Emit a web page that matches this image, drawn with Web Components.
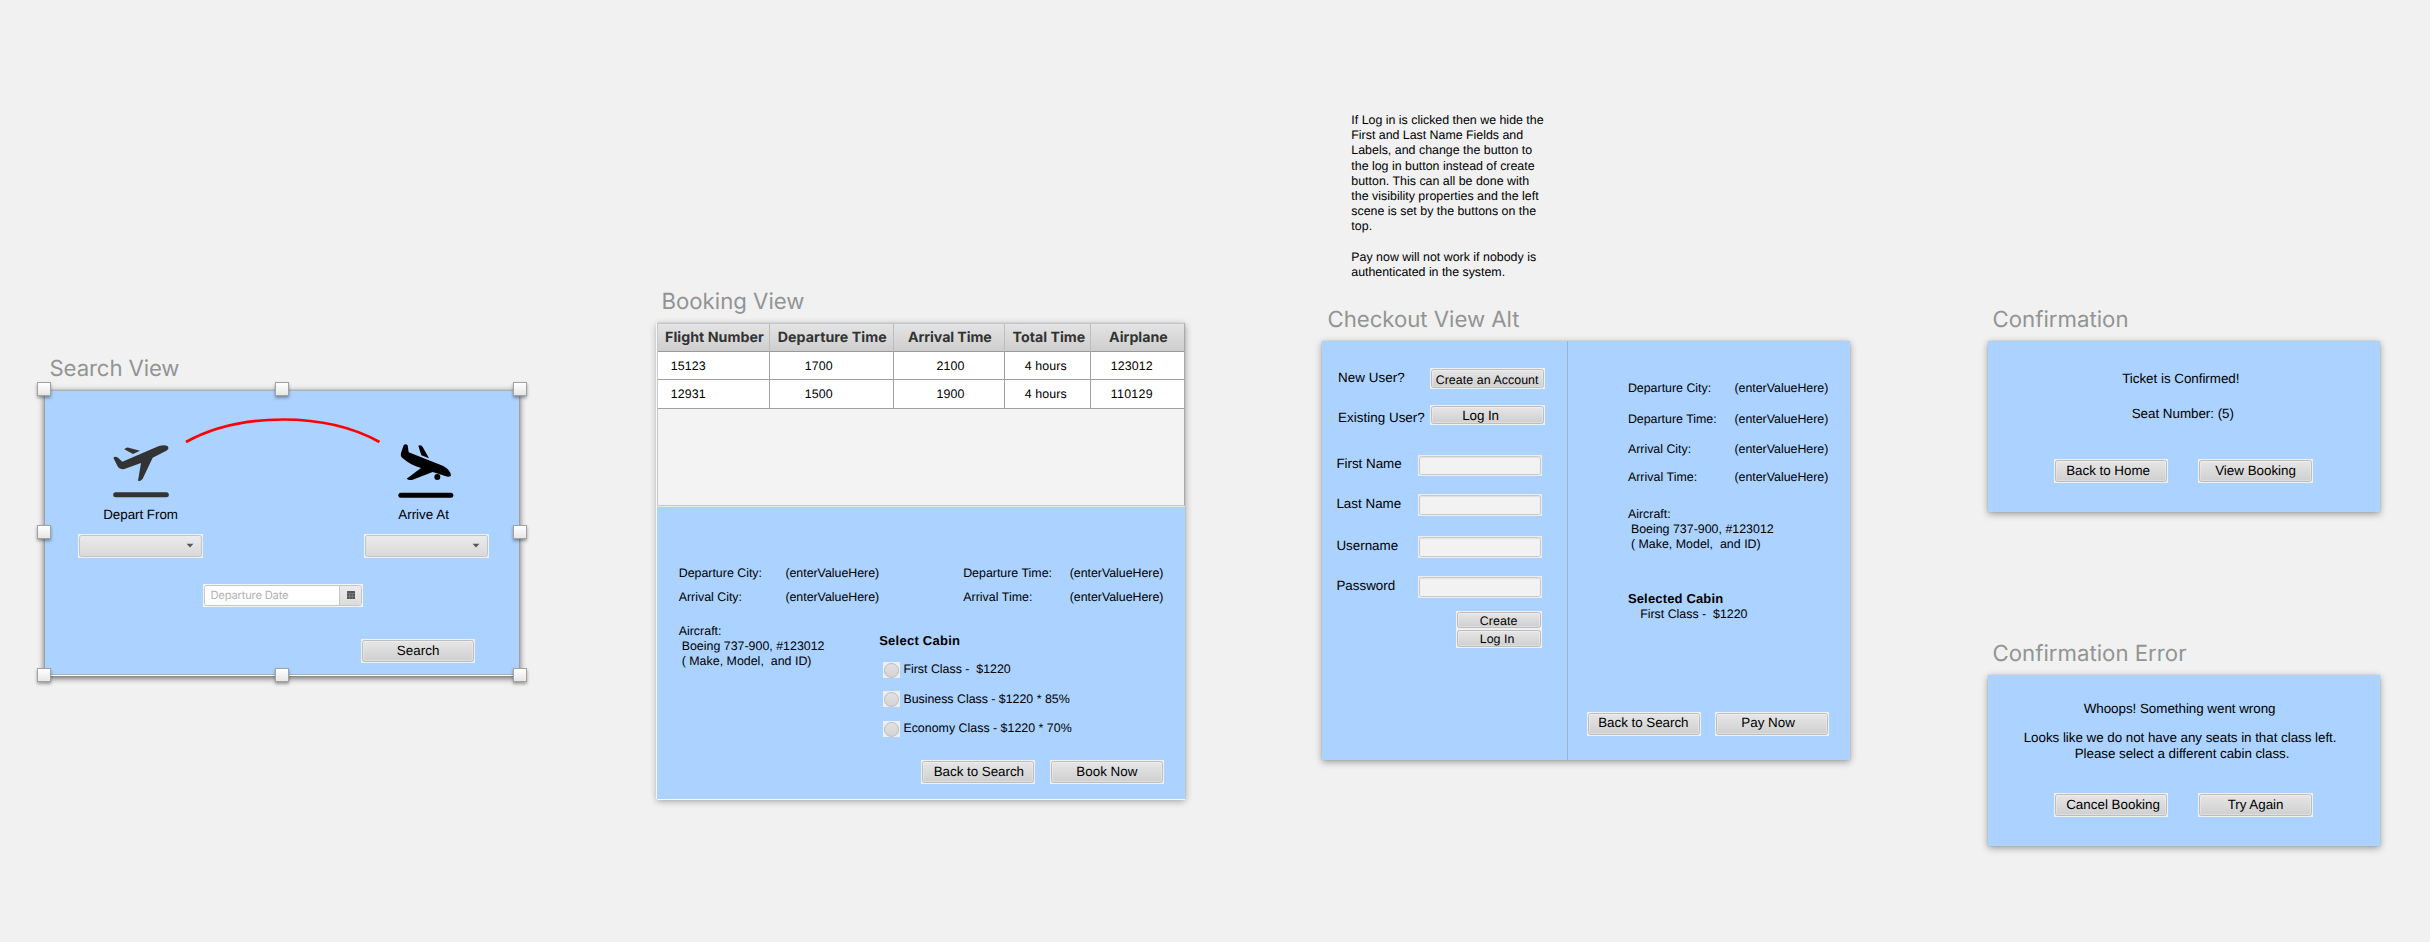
<!DOCTYPE html>
<html lang="en">
<head>
<meta charset="utf-8">
<title>Flight booking artboards</title>
<style>
html,body{margin:0;height:100%;background:#f1f1f1;overflow:hidden}
body{font-family:"Liberation Sans",Arial,sans-serif;color:#000;text-rendering:geometricPrecision}
</style>
</head>
<body>
<design-canvas></design-canvas>
<script>
const FLOW = `.r{display:flex;align-items:flex-start}.r>div{flex:none}`;

/* Lay items out in flowing rows; x/y are canvas units turned into margins. */
function stack(x0, y0, rows) {
  let y = y0;
  return rows.map(items => {
    const top = Math.min(...items.map(i => i.y));
    const bottom = Math.max(...items.map(i => i.y + i.h));
    let x = x0;
    const cells = items.map(i => {
      const s = `<div style="margin:${i.y - top}px 0 0 ${i.x - x}px;width:${i.w}px;height:${i.h}px">${i.html}</div>`;
      x = i.x + i.w;
      return s;
    }).join('');
    const row = `<div class="r" style="margin-top:${top - y}px;height:${bottom - top}px">${cells}</div>`;
    y = bottom;
    return row;
  }).join('');
}
const small = (x, b, w, t, k = '') => ({x: x - .3, y: b - 12, w: w + 2, h: 16, html: `<fit-text class="s ${k}" w="${w + .8}">${t}</fit-text>`});
const big = (x, b, w, t) => ({x: x - .3, y: b - 13, w: w + 2, h: 17, html: `<fit-text class="b" w="${w + .8}">${t}</fit-text>`});
const btn = (x, y, w, h, lx, lb, lw, t, k = 'b') => ({x, y, w, h,
  html: `<ui-button style="--pl:${lx - x - .3}px;--pt:${lb - y - (k === 'b' ? 13 : 12)}px"><fit-text class="${k}" w="${lw + .8}">${t}</fit-text></ui-button>`});
const box = (x, y, w, h, html) => ({x, y, w, h, html});
const group = (x, y, w, h, rows) => box(x, y, w, h, stack(x, y, rows));

function define(name, css, html, after) {
  customElements.define(name, class extends HTMLElement {
    connectedCallback() {
      if (this.shadowRoot) return;
      const root = this.attachShadow({mode: 'open'});
      root.innerHTML = `<style>${css}</style>${typeof html === 'function' ? html(this) : html}`;
      if (after) after(this, root);
    }
  });
}

/* Single line of text, tracked to an exact measure */
define('fit-text', `
:host{display:block;white-space:pre}
span{display:inline-block}
:host(.s){font-size:12.4px;line-height:16px}
:host(.b){font-size:13.4px;line-height:17px}
:host(.bold){font-weight:700;font-size:13px}
:host(.h){font:700 14.200px/20px Inter,sans-serif;color:#333}
:host(.t){font:400 22.200px/28px Inter,sans-serif;color:#929492}
:host(.d){font:400 11.200px/14px Inter,sans-serif;color:#b3b3b3}`,
'<span><slot></slot></span>', (el, root) => {
  const span = root.querySelector('span');
  const n = el.textContent.length, want = +el.getAttribute('w');
  if (want && n > 1) span.style.letterSpacing = ((want - span.getBoundingClientRect().width) / (n - 1)) + 'px';
});

define('ui-button', `
:host{display:block;height:100%;box-sizing:border-box;padding:1px;background:#eef0f3}
div{box-sizing:border-box;height:100%;border:1px solid #bdbdbd;border-radius:2.5px;background:linear-gradient(#e6e6e6,#cfcfcf);box-shadow:inset 0 0 0 1px rgba(255,255,255,.3)}
slot{display:block;margin:calc(var(--pt) - 2px) 0 0 calc(var(--pl) - 2px)}
div{display:flow-root}`, '<div><slot></slot></div>');

define('ui-select', `
:host{display:flex;height:100%;box-sizing:border-box;padding:1px;background:#eef0f3}
div{flex:1;display:flex;align-items:center;justify-content:flex-end;padding-right:7px;border:1px solid #c3c3c3;border-radius:2.5px;background:linear-gradient(#ebebeb,#d9d9d9)}`,
'<div><svg width="8" height="5" viewBox="0 0 8 5"><path d="M.6.8H7.4L4 4.4Z" fill="#555"/></svg></div>');

define('ui-field', `
:host{display:block;height:100%;box-sizing:border-box;padding:1px;background:#e9edf1}
div{box-sizing:border-box;height:100%;border:1px solid #cacaca;border-radius:2.5px;background:#f2f2f2;box-shadow:inset 0 1px 1px #e2e2e2}`, '<div></div>');

define('ui-date', `
:host{display:flex;height:100%;box-sizing:border-box;padding:1px;background:#f2f4f6}
main{flex:1;display:flex;border:1px solid #c6c6c6;border-radius:2.5px;background:#fff;overflow:hidden}
.v{flex:1;padding:2.5px 0 0 5.5px}
.c{width:21px;border-left:1px solid #c6c6c6;background:linear-gradient(#ececec,#dcdcdc);display:flex;align-items:center;justify-content:center}`,
`<main><div class="v"><fit-text class="d" w="78">Departure Date</fit-text></div>
<div class="c"><svg width="8" height="8" viewBox="0 0 8 8"><rect width="8" height="8" rx=".5" fill="#555"/><path d="M0 2.4H8M0 5.2H8M2.7 2.4V8M5.3 2.4V8" stroke="#999" stroke-width=".5"/></svg></div></main>`);

define('ui-radio', `
:host{display:flex;width:17px;height:16px;background:#eceef0;align-items:center;justify-content:center}
div{box-sizing:border-box;width:15px;height:15px;border:1px solid #bcbcbc;border-radius:50%;background:linear-gradient(#e2e2e2,#d3d3d3)}`, '<div></div>');

define('icon-takeoff', ':host,svg{display:block}',
`<svg width="56" height="54" viewBox="248 278 168 162" fill="#333"><path d="M249 319Q256 313 263 319L276 331L384 285Q404 278 412 285Q418 293 408 298L367 319L337 382Q330 391 323 388L332 335L282 353Q268 355 263 347Z"/><path d="M282 294Q286 288 295 289L329 298L308 308Z"/><rect x="248.500" y="422.500" width="167" height="15" rx="7.500"/></svg>`);
define('icon-landing', ':host,svg{display:block}',
`<svg width="56" height="55" viewBox="354 276 168 165"><path d="M371 283Q376 276 383 283L386 304L490 345Q512 357 513 374Q506 379 498 376L458 363L398 386Q386 389 380 383L423 351Q390 342 364 318Q361 312 363 306Z"/><path d="M415 284Q424 281 428 288L447 322L424 313Z"/><circle cx="472" cy="378" r="9"/><rect x="355" y="425" width="165" height="15" rx="7.500"/></svg>`);
define('flight-arc', ':host,svg{display:block}',
`<svg width="196" height="27" viewBox="185 416 196 27"><path d="M186 441C240 411 326 411 379.500 441" fill="none" stroke="#f00" stroke-width="2.700"/></svg>`);

/* Titled artboard: heading above, sheet below */
define('art-board', `
:host{position:absolute;display:block}
.name{height:28px;margin:0 0 7px var(--tx,6px)}
.sheet{width:var(--w);height:var(--h);background:#acd2ff;box-shadow:0 2px 7px rgba(0,0,0,.36),0 0 1px rgba(0,0,0,.2);display:flow-root}`,
el => `<div class="name"><fit-text class="t" w="${el.getAttribute('tw')}">${el.getAttribute('label')}</fit-text></div><div class="sheet"><slot></slot></div>`);

define('search-view', FLOW + ':host{display:block;height:283px;border-top:1px solid #a9b0b8;border-bottom:1px solid #a9b0b8;box-shadow:0 2px 0 -1px #fff,0 3px 6px rgba(0,0,0,.4)}', stack(45, 390, [
  [box(113, 443, 56, 54, '<icon-takeoff></icon-takeoff>'), box(185, 416, 196, 27, '<flight-arc></flight-arc>'), box(398, 442, 56, 55, '<icon-landing></icon-landing>')],
  [big(103.5, 518, 74, 'Depart From'), big(398.5, 518, 50, 'Arrive At')],
  [box(78, 533, 125, 24, '<ui-select></ui-select>'), box(364, 533, 125, 24, '<ui-select></ui-select>')],
  [box(203, 583, 160, 23, '<ui-date></ui-date>')],
  [btn(361, 638, 114, 24, 397, 654, 42, 'Search')]
]));

define('flight-table', `
:host{display:block;width:528px;height:184px;box-sizing:border-box;background:#f3f3f3;border-bottom:1px solid #e9e9e9}
.frame{box-sizing:border-box;height:183px;border:1px solid #c3c9cc;border-top-color:#b9c8d2;border-right-color:#aaa}
.g{display:grid;grid-template-columns:112px 124px 111px 86px 93px;grid-template-rows:28px 28px 29px}
.g>div{box-sizing:border-box;border-right:1px solid #a0a0a0;border-bottom:1px solid #a0a0a0;background:#fff;padding-left:var(--p)}
.g>.hd{background:linear-gradient(#e4e4e4,#cecece);border-right-color:#bdbdbd;border-bottom-color:#999}
.g>div:nth-child(5n){border-right:0}
.hd fit-text{margin-top:4px}
.c fit-text{margin-top:6px}`,
() => {
  const cell = (cls, p, w, t, k) => `<div class="${cls}" style="--p:${p}px"><fit-text class="${k}" w="${w + .8}">${t}</fit-text></div>`;
  const H = [[7, 98, 'Flight Number'], [7.8, 108, 'Departure Time'], [14, 83, 'Arrival Time'], [7.5, 72, 'Total Time'], [18, 58, 'Airplane']];
  const R = v => [[12.8, 34], [34.8, 27], [42.5, 27], [19.8, 41], [19.8, 41]].map((m, i) => cell('c', m[0], m[1], v[i], 's')).join('');
  return `<div class="frame"><div class="g">${H.map(h => cell('hd', ...h, 'h')).join('')}${R(['15123', '1700', '2100', '4 hours', '123012'])}${R(['12931', '1500', '1900', '4 hours', '110129'])}</div></div>`;
});

const aircraft = (x, b) => [
  [small(x, b, 42, 'Aircraft:')],
  [small(x + 3, b + 15, 142, 'Boeing 737-900, #123012')],
  [small(x + 3, b + 30, 129, '( Make, Model,  and ID)')]
];
const V = '(enterValueHere)';

define('booking-view', FLOW + ':host{display:block;height:476px;box-shadow:-1px 0 0 #f6f8fa,0 1px 0 #f6f8fa}', '<flight-table></flight-table>' + stack(657, 507, [
  [small(679, 577, 82.5, 'Departure City:'), small(785.7, 577, 93, V), small(963.5, 577, 88, 'Departure Time:'), small(1070, 577, 93, V)],
  [small(679, 601, 62.5, 'Arrival City:'), small(785.7, 601, 93, V), small(963.5, 601, 68.5, 'Arrival Time:'), small(1070, 601, 93, V)],
  [group(678, 623, 160, 50, aircraft(679, 635)), group(878, 632, 210, 106, [
    [small(879.5, 645, 80, 'Select Cabin', 'bold')],
    [box(883, 662, 17, 16, '<ui-radio></ui-radio>'), small(903.7, 673, 106.5, 'First Class -  $1220')],
    [box(883, 691, 17, 16, '<ui-radio></ui-radio>'), small(903.7, 703, 165.5, 'Business Class - $1220 * 85%')],
    [box(883, 721, 17, 16, '<ui-radio></ui-radio>'), small(903.7, 732, 167.5, 'Economy Class - $1220 * 70%')]
  ])],
  [btn(921, 760, 114, 24, 934, 776, 89.5, 'Back to Search'), btn(1050, 760, 114, 24, 1076.5, 776, 60.5, 'Book Now')]
]));

define('checkout-view', FLOW + `:host{display:flex;height:419px}
.l{width:244.500px;border-right:1.500px solid #9bb2cd}.x{flex:1}`,
'<div class="l">' + stack(1322, 341, [
  [big(1338.3, 382, 66, 'New User?'), btn(1430, 368, 115, 21, 1436, 384, 102, 'Create an Account', 's')],
  [big(1338.3, 422, 86, 'Existing User?'), btn(1430, 405, 115, 20, 1462.5, 420, 36, 'Log In')],
  [big(1336.7, 468, 64.5, 'First Name'), box(1418, 455, 124, 21, '<ui-field></ui-field>')],
  [big(1336.7, 508, 64, 'Last Name'), box(1418, 494, 124, 22, '<ui-field></ui-field>')],
  [big(1336.7, 550, 61, 'Username'), box(1418, 536, 124, 22, '<ui-field></ui-field>')],
  [big(1336.7, 590, 58, 'Password'), box(1418, 576, 124, 22, '<ui-field></ui-field>')],
  [btn(1456, 611, 86, 18, 1480, 625, 37, 'Create', 's')],
  [btn(1456, 629, 86, 19, 1480, 643, 34, 'Log In', 's')]
]) + '</div><div class="x">' + stack(1568, 341, [
  [small(1628.7, 392, 82.5, 'Departure City:'), small(1735.3, 392, 93, V)],
  [small(1628.7, 423, 88, 'Departure Time:'), small(1735.3, 423, 93, V)],
  [small(1628.7, 453, 62.5, 'Arrival City:'), small(1735.3, 453, 93, V)],
  [small(1628.7, 481, 68.5, 'Arrival Time:'), small(1735.3, 481, 93, V)],
  [group(1628, 506, 160, 50, aircraft(1628.7, 518))],
  [small(1628.7, 603, 94.5, 'Selected Cabin', 'bold')],
  [small(1641, 618, 106.5, 'First Class -  $1220')],
  [btn(1587, 712, 114, 24, 1599, 727, 89.5, 'Back to Search'), btn(1715, 712, 114, 24, 1742, 727, 53, 'Pay Now')]
]) + '</div>');

define('confirm-view', FLOW + ':host{display:block;height:171px}', stack(1987.5, 341, [
  [big(2122.5, 383, 116.5, 'Ticket is Confirmed!')],
  [big(2132, 418, 101.5, 'Seat Number: (5)')],
  [btn(2054, 459, 114, 24, 2066.5, 475, 83, 'Back to Home'), btn(2198, 459, 115, 24, 2215.5, 475, 80, 'View Booking')]
]));
define('error-view', FLOW + ':host{display:block;height:171px}', stack(1987.5, 675, [
  [big(2084, 713, 191, 'Whoops! Something went wrong')],
  [big(2024, 742, 312, 'Looks like we do not have any seats in that class left.')],
  [big(2075, 758, 214, 'Please select a different cabin class.')],
  [btn(2054, 793, 114, 24, 2066.5, 809, 93, 'Cancel Booking'), btn(2198, 793, 115, 24, 2228, 809, 55, 'Try Again')]
]));

define('selection-handles', `
:host{position:absolute;display:block}
i{position:absolute;box-sizing:border-box;width:14px;height:14px;border:1px solid #a2a2a2;background:linear-gradient(#fff,#e6e6e6);box-shadow:0 2px 3px rgba(0,0,0,.35)}`,
[0, 238, 476].flatMap((x, c) => [0, 143, 285.5].map((y, r) => c === 1 && r === 1 ? '' : `<i style="left:${x}px;top:${y}px"></i>`)).join(''));

define('sticky-note', `:host{position:absolute;display:block}fit-text.s{line-height:15.200px}p{margin:0 0 15.200px}`,
'<p>' + [['If Log in is clicked then we hide the', 191.5], ['First and Last Name Fields and', 171], ['Labels, and change the button to', 180], ['the log in button instead of create', 182.5], ['button. This can all be done with', 177], ['the visibility properties and the left', 186.5], ['scene is set by the buttons on the', 184], ['top.', 20]].map(a => `<fit-text class="s" w="${a[1] + .8}">${a[0]}</fit-text>`).join('') +
'</p><p>' + [['Pay now will not work if nobody is', 184], ['authenticated in the system.', 153]].map(a => `<fit-text class="s" w="${a[1] + .8}">${a[0]}</fit-text>`).join('') + '</p>');

define('design-canvas', ':host{display:block;position:relative;width:2430px;height:942px}', `
<art-board label="Search View" tw="130" style="left:45px;top:354.500px;--w:474px;--h:285px;--tx:4.500px"><search-view></search-view></art-board>
<selection-handles style="left:37px;top:382px"></selection-handles>
<art-board label="Booking View" tw="143" style="left:657px;top:288px;--w:528px;--h:476px;--tx:4.500px"><booking-view></booking-view></art-board>
<sticky-note style="left:1351.300px;top:113px"></sticky-note>
<art-board label="Checkout View Alt" tw="192" style="left:1322px;top:306px;--w:528px;--h:419px;--tx:5.500px"><checkout-view></checkout-view></art-board>
<art-board label="Confirmation" tw="136" style="left:1987.500px;top:306px;--w:392px;--h:171px;--tx:5px"><confirm-view></confirm-view></art-board>
<art-board label="Confirmation Error" tw="194" style="left:1987.500px;top:640px;--w:392px;--h:171px;--tx:5px"><error-view></error-view></art-board>`);
</script>
</body>
</html>
